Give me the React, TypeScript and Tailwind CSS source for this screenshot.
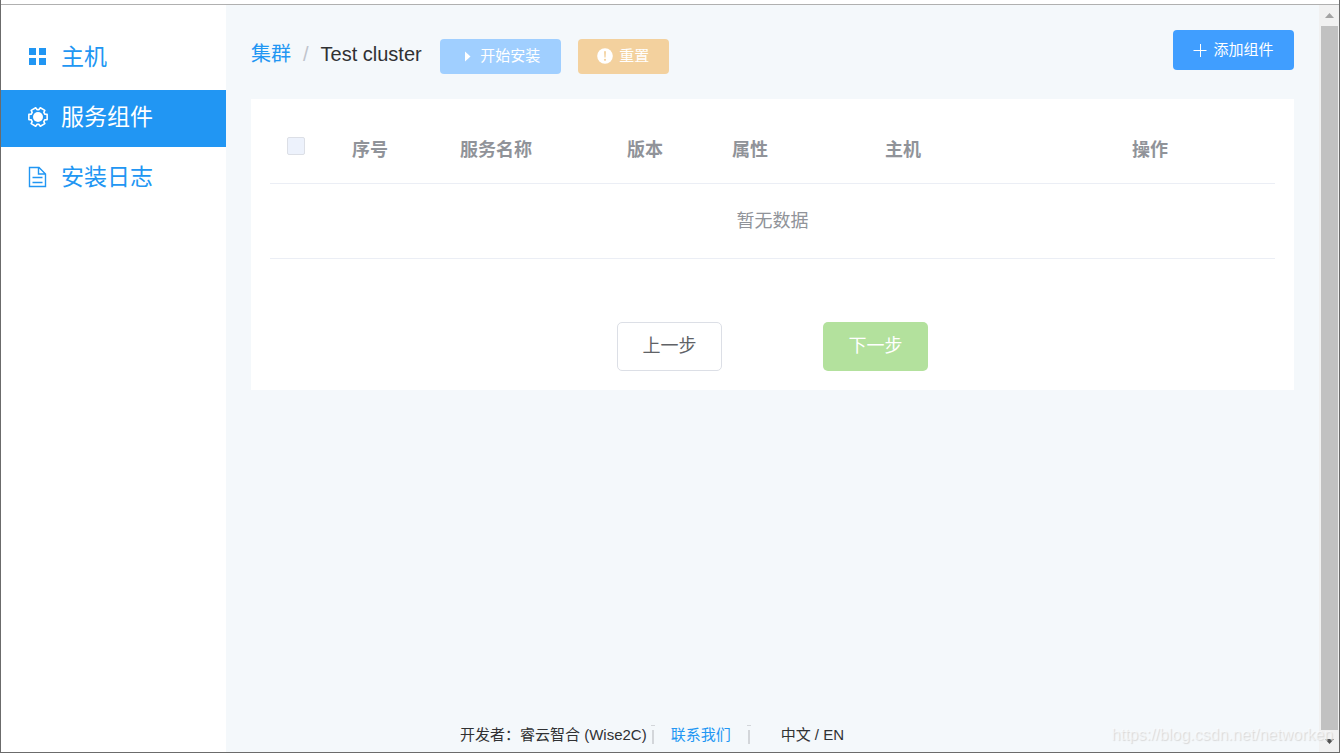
import React from 'react';

const GEAR_POINTS = [0, 60, 120, 180, 240, 300]
  .flatMap((a) => [
    [a - 16, 9.5],
    [a + 16, 9.5],
    [a + 22, 7.4],
    [a + 38, 7.4],
  ])
  .map(([deg, r]) => {
    const rad = (deg * Math.PI) / 180;
    return `${(11 + r * Math.cos(rad)).toFixed(2)},${(11 + r * Math.sin(rad)).toFixed(2)}`;
  })
  .join(' ');

const MenuIcon: React.FC = () => (
  <svg width="22" height="22" viewBox="0 0 22 22" fill="currentColor" aria-hidden="true">
    <path d="M2 2h7v7H2zM12 2h7v7h-7zM2 12h7v7H2zM12 12h7v7h-7z" />
  </svg>
);

const GearIcon: React.FC = () => (
  <svg width="22" height="22" viewBox="0 0 22 22" aria-hidden="true">
    <polygon points={GEAR_POINTS} fill="none" stroke="currentColor" strokeWidth="1.6" strokeLinejoin="round" />
    <circle cx="11" cy="11" r="5" fill="currentColor" />
  </svg>
);

const DocumentIcon: React.FC = () => (
  <svg width="22" height="22" viewBox="0 0 22 22" fill="none" stroke="currentColor" strokeWidth="1.4" aria-hidden="true">
    <path d="M2.5 1.5h9.5l6.5 6.5v12.5h-16zM11.5 1.5v6.5h7M5.5 11.5h10M5.5 16.5h10" />
  </svg>
);

const NAV = [
  { label: '主机', icon: <MenuIcon />, active: false },
  { label: '服务组件', icon: <GearIcon />, active: true },
  { label: '安装日志', icon: <DocumentIcon />, active: false },
];

const Sidebar: React.FC = () => (
  <nav className="flex w-[225px] shrink-0 flex-col gap-[3px] bg-white pt-[25px]">
    {NAV.map(({ label, icon, active }) => (
      <a
        key={label}
        href="#"
        className={`flex h-[57px] items-center gap-3 pb-[3px] pl-[26px] text-[23px] ${
          active ? 'bg-[#2196f3] text-white' : 'text-[#2196f3]'
        }`}
      >
        {icon}
        <span className="leading-7">{label}</span>
      </a>
    ))}
  </nav>
);

const Toolbar: React.FC = () => (
  <header className="flex h-10 items-center">
    <div className="mt-2 flex items-center text-xl text-[#303133]">
      <a href="#" className="text-[#2196f3]">集群</a>
      <span className="mx-3 text-[#c0c4cc]">/</span>
      <span>Test cluster</span>
    </div>
    <button
      disabled
      className="mt-3 ml-[18px] flex h-[35px] w-[121px] items-center justify-center gap-[5px] rounded-[4px] bg-[#a0cfff] text-[15px] text-white"
    >
      <svg width="15" height="15" viewBox="0 0 15 15" fill="currentColor" aria-hidden="true">
        <path d="M5 2.5l5.5 5-5.5 5z" />
      </svg>
      开始安装
    </button>
    <button
      disabled
      className="mt-3 ml-[17px] flex h-[35px] w-[91px] items-center justify-center gap-[6px] rounded-[4px] bg-[#f3d19e] text-[15px] text-white"
    >
      <svg width="16" height="16" viewBox="0 0 16 16" aria-hidden="true">
        <circle cx="8" cy="8" r="7.8" fill="currentColor" />
        <path d="M7 3.2h2l-.4 6.2H7.4z" fill="#f3d19e" />
        <circle cx="8" cy="11.8" r="1.1" fill="#f3d19e" />
      </svg>
      重置
    </button>
    <button className="ml-auto flex h-10 w-[121px] items-center justify-center gap-[6px] rounded-[4px] bg-[#409eff] text-[15px] text-white">
      <svg width="14" height="14" viewBox="0 0 14 14" stroke="currentColor" aria-hidden="true">
        <path d="M.5 7.5h13M7.5 1v13" />
      </svg>
      添加组件
    </button>
  </header>
);

const ComponentTable: React.FC = () => (
  <table className="w-full table-fixed border-collapse text-left text-lg text-[#909399]">
    <colgroup>
      <col className="w-[69px]" />
      <col className="w-[108px]" />
      <col className="w-[167px]" />
      <col className="w-[105px]" />
      <col className="w-[153px]" />
      <col />
      <col className="w-[250px]" />
    </colgroup>
    <thead>
      <tr className="h-[65px] border-b border-[#ebeef5]">
        <th className="pb-2 pl-[17px]">
          <input
            type="checkbox"
            disabled
            aria-label="全选"
            className="block size-[18px] appearance-none rounded-[2px] border border-[#dcdfe6] bg-[#edf2fc]"
          />
        </th>
        <th className="pl-[13px]">序号</th>
        <th className="pl-[13px]">服务名称</th>
        <th className="pl-[13px]">版本</th>
        <th className="pl-[13px]">属性</th>
        <th className="pl-[13px]">主机</th>
        <th className="text-center">操作</th>
      </tr>
    </thead>
    <tbody>
      <tr className="h-[75px] border-b border-[#ebeef5]">
        <td colSpan={7} className="text-center">暂无数据</td>
      </tr>
    </tbody>
  </table>
);

const Divider: React.FC = () => (
  <svg width="4" height="20" viewBox="0 0 4 20" aria-hidden="true">
    <path d="M0 0h4v1H0zM1 5h2v14H1z" fill="#d3d6da" />
  </svg>
);

const Footer: React.FC = () => (
  <footer className="mt-auto flex items-center pb-[6px] pl-[209px] text-[15px] text-[#303133]">
    <span className="mr-1">开发者：睿云智合 (Wise2C)</span>
    <Divider />
    <a href="#" className="mx-4 text-[#2196f3]">联系我们</a>
    <Divider />
    <span className="ml-[30px]">中文 / EN</span>
  </footer>
);

const Scrollbar: React.FC = () => (
  <div className="flex w-5 shrink-0 flex-col items-center bg-[#f1f1f1]">
    <button aria-label="Scroll up" className="flex h-[21px] items-center justify-center">
      <svg width="9" height="5" viewBox="0 0 9 5" fill="#a3a3a3"><path d="M0 5l4.5-5L9 5z" /></svg>
    </button>
    <div className="w-[17px] flex-1 bg-[#c1c1c1]" />
    <button aria-label="Scroll down" className="flex h-[22px] items-center justify-center">
      <svg width="9" height="5" viewBox="0 0 9 5" fill="#505050"><path d="M0 0l4.5 5L9 0z" /></svg>
    </button>
  </div>
);

export default function App() {
  return (
    <div className="relative flex h-screen flex-col border-x border-b border-[#6b6b6b] bg-white font-['Liberation_Sans','Noto_Sans_CJK_SC',sans-serif]">
      <div className="h-[5px] shrink-0 border-b border-[#b0b0b0]" />
      <div className="flex min-h-0 flex-1 bg-[#f4f8fb]">
        <Sidebar />
        <main className="flex min-w-0 flex-1 flex-col px-[25px] pt-[25px]">
          <Toolbar />
          <section className="mt-[29px] bg-white p-[19px]">
            <ComponentTable />
            <div className="mt-[63px] flex justify-center gap-[101px] text-lg">
              <button className="h-[49px] w-[105px] rounded-[5px] border border-[#dcdfe6] bg-white text-[#606266]">
                上一步
              </button>
              <button disabled className="h-[49px] w-[105px] rounded-[5px] bg-[#b3e19d] text-white">
                下一步
              </button>
            </div>
          </section>
          <Footer />
        </main>
        <Scrollbar />
      </div>
      <span className="pointer-events-none absolute right-[6px] bottom-[5px] text-base text-white/50 [text-shadow:1px_1px_1px_#d8d8d8]">
        https://blog.csdn.net/networken
      </span>
    </div>
  );
}
